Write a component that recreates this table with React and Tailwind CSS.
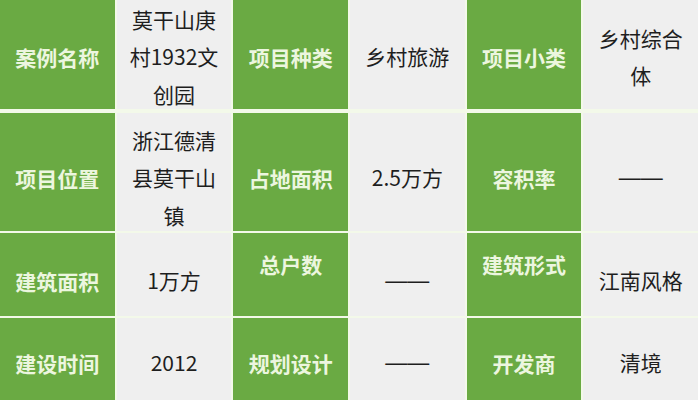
import React from "react";

const font = { fontFamily: '"Noto Sans CJK SC", "Noto Sans", sans-serif' };

function L({ children, top }) {
  return (
    <div
      className={`flex justify-center min-h-0 overflow-visible bg-[#6aaa43] text-[#ecf6df] font-bold text-[21px] leading-[37px] ${top ? "items-start pt-[10px]" : "items-center"}`}
    >
      <div className="text-center">{children}</div>
    </div>
  );
}

function V({ lines }) {
  return (
    <div className="flex items-center justify-center min-h-0 bg-[#efefef] text-[#1e1e1e] text-[21px] leading-[37.5px]">
      <div className="text-center">
        {lines.map((l, i) => (
          <div key={i}>{l}</div>
        ))}
      </div>
    </div>
  );
}

function Dash() {
  return (
    <div className="flex items-center justify-center min-h-0 bg-[#efefef] text-[#1e1e1e] text-[22px] leading-[37.5px]">
      <span style={{ fontFamily: '"Liberation Sans", Arial, sans-serif' }}>——</span>
    </div>
  );
}

export default function App() {
  return (
    <div className="w-[698px] h-[400px] overflow-hidden bg-[#f3f9e9]" style={font}>
      <div className="grid grid-cols-6 grid-rows-1 gap-x-[2px] h-[109px] [&>div]:pt-[5px]">
        <L>案例名称</L>
        <V lines={["莫干山庚", "村1932文", "创园"]} />
        <L>项目种类</L>
        <V lines={["乡村旅游"]} />
        <L>项目小类</L>
        <V lines={["乡村综合", "体"]} />
      </div>
      <div className="grid grid-cols-6 grid-rows-1 gap-x-[2px] h-[118px] mt-[4px] [&>div]:pt-[12px]">
        <L>项目位置</L>
        <V lines={["浙江德清", "县莫干山", "镇"]} />
        <L>占地面积</L>
        <V lines={["2.5万方"]} />
        <L>容积率</L>
        <Dash />
      </div>
      <div className="grid grid-cols-6 grid-rows-1 gap-x-[2px] h-[83px] mt-[2px] [&>div]:pt-[13px]">
        <L>建筑面积</L>
        <V lines={["1万方"]} />
        <L top>总户数</L>
        <Dash />
        <L top>建筑形式</L>
        <V lines={["江南风格"]} />
      </div>
      <div className="grid grid-cols-6 grid-rows-1 gap-x-[2px] h-[82px] mt-[2px] [&>div]:pt-[8px]">
        <L>建设时间</L>
        <V lines={["2012"]} />
        <L>规划设计</L>
        <Dash />
        <L>开发商</L>
        <V lines={["清境"]} />
      </div>
    </div>
  );
}
